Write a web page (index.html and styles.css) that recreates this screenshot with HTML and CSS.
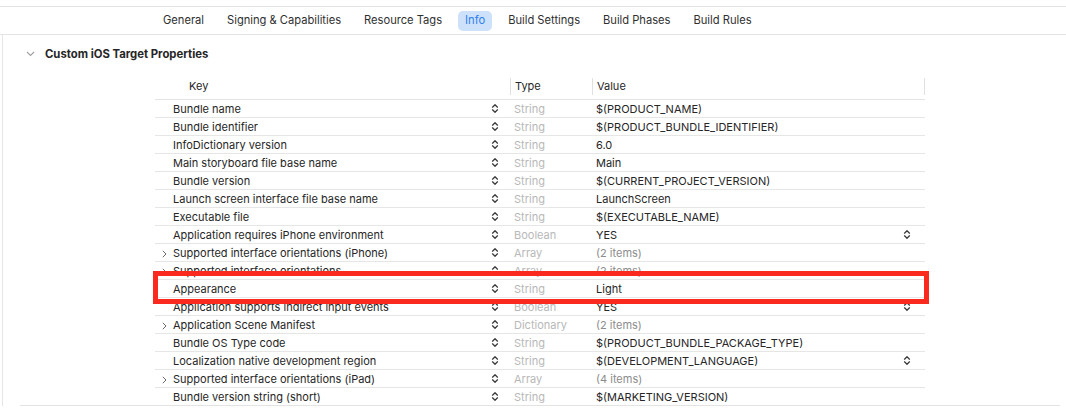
FILE: index.html
```html
<!DOCTYPE html>
<html>
<head>
<meta charset="utf-8">
<link rel="stylesheet" href="styles.css">
</head>
<body>
<div class="tabbar">
  <div class="tab">General</div>
  <div class="tab">Signing &amp; Capabilities</div>
  <div class="tab">Resource Tags</div>
  <div class="tab active">Info</div>
  <div class="tab">Build Settings</div>
  <div class="tab">Build Phases</div>
  <div class="tab">Build Rules</div>
</div>
<div class="main">
  <div class="section-head">
    <svg class="sec-chev" width="9" height="6" viewBox="0 0 9 6"><path d="M1 1 L4.5 4.5 L8 1" fill="none" stroke="#a0a0a0" stroke-width="1.1"/></svg>
    <span class="sec-title">Custom iOS Target Properties</span>
  </div>
  <div class="table">
    <div class="thead">
      <div class="c-key h-key">Key</div>
      <div class="c-type h-sep">Type</div>
      <div class="c-val h-sep h-last">Value</div>
    </div>

    <div class="row"><div class="c-key"><span class="k">Bundle name</span><svg class="step"><use href="#st"/></svg></div><div class="c-type">String</div><div class="c-val">$(PRODUCT_NAME)</div></div>
    <div class="row"><div class="c-key"><span class="k">Bundle identifier</span><svg class="step"><use href="#st"/></svg></div><div class="c-type">String</div><div class="c-val">$(PRODUCT_BUNDLE_IDENTIFIER)</div></div>
    <div class="row"><div class="c-key"><span class="k">InfoDictionary version</span><svg class="step"><use href="#st"/></svg></div><div class="c-type">String</div><div class="c-val">6.0</div></div>
    <div class="row"><div class="c-key"><span class="k">Main storyboard file base name</span><svg class="step"><use href="#st"/></svg></div><div class="c-type">String</div><div class="c-val">Main</div></div>
    <div class="row"><div class="c-key"><span class="k">Bundle version</span><svg class="step"><use href="#st"/></svg></div><div class="c-type">String</div><div class="c-val">$(CURRENT_PROJECT_VERSION)</div></div>
    <div class="row"><div class="c-key"><span class="k">Launch screen interface file base name</span><svg class="step"><use href="#st"/></svg></div><div class="c-type">String</div><div class="c-val">LaunchScreen</div></div>
    <div class="row"><div class="c-key"><span class="k">Executable file</span><svg class="step"><use href="#st"/></svg></div><div class="c-type">String</div><div class="c-val">$(EXECUTABLE_NAME)</div></div>
    <div class="row"><div class="c-key"><span class="k">Application requires iPhone environment</span><svg class="step"><use href="#st"/></svg></div><div class="c-type">Boolean</div><div class="c-val"><span class="v">YES</span><svg class="step vstep"><use href="#st"/></svg></div></div>
    <div class="row"><div class="c-key"><svg class="disc" width="5" height="8" viewBox="0 0 5 8"><path d="M0.8 0.8 L4 4 L0.8 7.2" fill="none" stroke="#6a6a6a" stroke-width="1"/></svg><span class="k">Supported interface orientations (iPhone)</span><svg class="step"><use href="#st"/></svg></div><div class="c-type">Array</div><div class="c-val dim">(2 items)</div></div>
    <div class="row"><div class="c-key"><svg class="disc" width="5" height="8" viewBox="0 0 5 8"><path d="M0.8 0.8 L4 4 L0.8 7.2" fill="none" stroke="#6a6a6a" stroke-width="1"/></svg><span class="k">Supported interface orientations</span><svg class="step"><use href="#st"/></svg></div><div class="c-type">Array</div><div class="c-val dim">(2 items)</div></div>
    <div class="row hl"><div class="c-key"><span class="k">Appearance</span><svg class="step"><use href="#st"/></svg></div><div class="c-type">String</div><div class="c-val">Light</div><div class="redbox"></div></div>
    <div class="row"><div class="c-key"><span class="k">Application supports indirect input events</span><svg class="step"><use href="#st"/></svg></div><div class="c-type">Boolean</div><div class="c-val"><span class="v">YES</span><svg class="step vstep"><use href="#st"/></svg></div></div>
    <div class="row"><div class="c-key"><svg class="disc" width="5" height="8" viewBox="0 0 5 8"><path d="M0.8 0.8 L4 4 L0.8 7.2" fill="none" stroke="#6a6a6a" stroke-width="1"/></svg><span class="k">Application Scene Manifest</span><svg class="step"><use href="#st"/></svg></div><div class="c-type">Dictionary</div><div class="c-val dim">(2 items)</div></div>
    <div class="row"><div class="c-key"><span class="k">Bundle OS Type code</span><svg class="step"><use href="#st"/></svg></div><div class="c-type">String</div><div class="c-val">$(PRODUCT_BUNDLE_PACKAGE_TYPE)</div></div>
    <div class="row"><div class="c-key"><span class="k">Localization native development region</span><svg class="step"><use href="#st"/></svg></div><div class="c-type">String</div><div class="c-val"><span class="v">$(DEVELOPMENT_LANGUAGE)</span><svg class="step vstep"><use href="#st"/></svg></div></div>
    <div class="row"><div class="c-key"><svg class="disc" width="5" height="8" viewBox="0 0 5 8"><path d="M0.8 0.8 L4 4 L0.8 7.2" fill="none" stroke="#6a6a6a" stroke-width="1"/></svg><span class="k">Supported interface orientations (iPad)</span><svg class="step"><use href="#st"/></svg></div><div class="c-type">Array</div><div class="c-val dim">(4 items)</div></div>
    <div class="row last"><div class="c-key"><span class="k">Bundle version string (short)</span><svg class="step"><use href="#st"/></svg></div><div class="c-type">String</div><div class="c-val">$(MARKETING_VERSION)</div></div>
  </div>
  <div class="section-foot"></div>
</div>
<svg width="0" height="0" style="position:absolute">
  <defs>
    <g id="st" fill="none" stroke="#3a3a3a" stroke-width="1.25" stroke-linecap="round" stroke-linejoin="round">
      <path d="M1.5 4.2 L4 1.7 L6.5 4.2"/>
      <path d="M1.5 6.8 L4 9.3 L6.5 6.8"/>
    </g>
  </defs>
</svg>
</body>
</html>
```
FILE: styles.css
```css
html, body {
  margin: 0;
  padding: 0;
  background: #ffffff;
}
body {
  padding-top: 6px;
  font-family: "Inter", "Liberation Sans", sans-serif;
  font-size: 11px;
  color: #262626;
}
.tabbar {
  display: flex;
  align-items: center;
  gap: 9px;
  height: 27px;
  padding-left: 156px;
  border-top: 1px solid #e3e3e3;
  border-bottom: 1px solid #e3e3e3;
}
.tab {
  padding: 0 7px;
  height: 20px;
  line-height: 19px;
  border-radius: 5px;
  color: #2f2f2f;
  margin-top: 1px;
  font-size: 11.15px;
}
.tab.active {
  background: #cde1fa;
  color: #2d7ef0;
}
.main {
  margin-left: 2px;
  border-left: 1px solid #e6e6e6;
}
.section-head {
  display: flex;
  align-items: center;
  height: 38px;
  margin-bottom: 4px;
  padding-left: 23px;
}
.sec-chev {
  margin-right: 10px;
}
.sec-title {
  font-weight: 700;
  font-size: 11.3px;
  color: #262626;
}
.table {
  margin-left: 152px;
  width: 770px;
}
.thead {
  display: flex;
  align-items: center;
  height: 22px;
  border-bottom: 1px solid #e4e4e4;
}
.thead > div {
  height: 17px;
  line-height: 17px;
  margin-top: -4px;
}
.thead .h-key {
  padding-left: 34px;
}
.h-sep {
  border-left: 1px solid #e0e0e0;
}
.h-last {
  border-right: 1px solid #e0e0e0;
}
.c-key {
  width: 355px;
  box-sizing: border-box;
  display: flex;
  align-items: center;
  padding-left: 18px;
  padding-right: 11px;
  position: relative;
}
.c-type {
  width: 82px;
  box-sizing: border-box;
  padding-left: 4px;
  color: #b8b8b8;
}
.c-val {
  width: 333px;
  box-sizing: border-box;
  padding-left: 4px;
  padding-right: 14px;
  display: flex;
  align-items: center;
}
.thead .c-type, .thead .c-val {
  color: #262626;
}
.row {
  display: flex;
  align-items: center;
  height: 17px;
  border-bottom: 1px solid #e6e6e6;
  position: relative;
  background: #fff;
}
.row.hl {
  z-index: 2;
}
.row.last {
  border-bottom: none;
}
.k {
  flex: 1;
  white-space: nowrap;
}
.v {
  flex: 1;
}
.dim {
  color: #8c8c8c;
}
.disc {
  position: absolute;
  left: 7px;
  top: 4px;
}
.step {
  width: 8px;
  height: 11px;
}
.redbox {
  position: absolute;
  left: -2px;
  top: -9px;
  width: 776px;
  height: 33px;
  box-sizing: border-box;
  border: 5px solid #fb2a1e;
  pointer-events: none;
}
.section-foot {
  margin-left: 17px;
  margin-right: 6px;
  border-bottom: 1px solid #e3e3e3;
}
```
